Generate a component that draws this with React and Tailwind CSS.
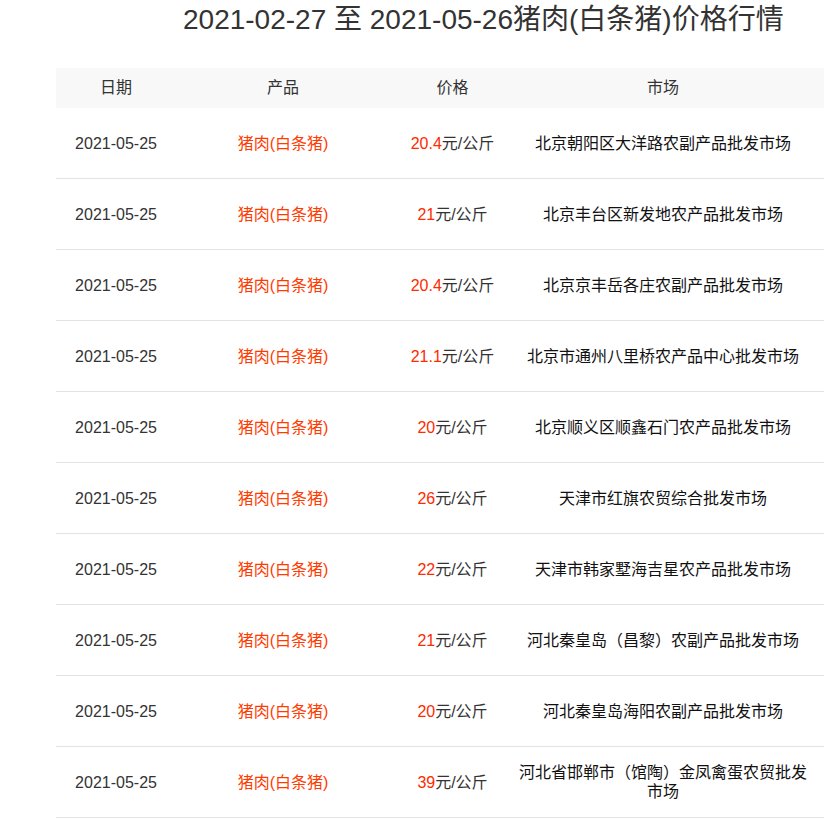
import React from "react";

const rows = [
  { price: "20.4", market: "北京朝阳区大洋路农副产品批发市场" },
  { price: "21", market: "北京丰台区新发地农产品批发市场" },
  { price: "20.4", market: "北京京丰岳各庄农副产品批发市场" },
  { price: "21.1", market: "北京市通州八里桥农产品中心批发市场" },
  { price: "20", market: "北京顺义区顺鑫石门农产品批发市场" },
  { price: "26", market: "天津市红旗农贸综合批发市场" },
  { price: "22", market: "天津市韩家墅海吉星农产品批发市场" },
  { price: "21", market: "河北秦皇岛（昌黎）农副产品批发市场" },
  { price: "20", market: "河北秦皇岛海阳农副产品批发市场" },
  { price: "39", market: "河北省邯郸市（馆陶）金凤禽蛋农贸批发市场" },
];

const App = () => {
  return (
    <div
      className="w-full overflow-hidden bg-white text-[#333]"
      style={{ fontFamily: '"Liberation Sans", "Noto Sans CJK SC", sans-serif' }}
    >
      {/* title */}
      <h1 className="pl-[183px] pt-[2px] h-[68px] text-[28px] leading-[36px] text-[#333] whitespace-nowrap">
        2021-02-27 至 2021-05-26猪肉(白条猪)价格行情
      </h1>

      <div className="ml-14 min-w-[768px] text-[16px]">
        {/* header */}
        <div className="flex h-10 items-center bg-[#f8f8f8] text-[#333]">
          <div className="w-[120px] shrink-0 text-center">日期</div>
          <div className="w-[214px] shrink-0 text-center">产品</div>
          <div className="w-[125px] shrink-0 text-center">价格</div>
          <div className="w-[296px] shrink-0 text-center">市场</div>
        </div>

        {rows.map((r, i) => (
          <div
            key={i}
            className="flex h-[71px] items-center border-b border-[#e3e3e3] leading-[19px]"
          >
            <div className="w-[120px] shrink-0 text-center text-[#333]">2021-05-25</div>
            <div className="w-[214px] shrink-0 text-center text-[#ff3c00]">猪肉(白条猪)</div>
            <div className="w-[125px] shrink-0 text-center text-[#333]">
              <span className="text-[#ff2a00]">{r.price}</span>元/公斤
            </div>
            <div className="w-[296px] shrink-0 text-center text-[#111]">{r.market}</div>
          </div>
        ))}
      </div>
    </div>
  );
};

export default App;
